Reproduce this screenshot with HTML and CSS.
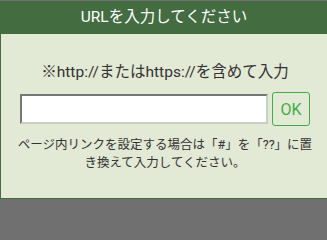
FILE: index.html
```html
<!DOCTYPE html>
<html lang="ja">
<head>
<meta charset="utf-8">
<link rel="stylesheet" href="styles.css">
</head>
<body>
<div class="dialog">
  <div class="header">URLを入力してください</div>
  <div class="content">
    <p class="hint">※http://またはhttps://を含めて入力</p>
    <div class="row">
      <input class="url" type="text">
      <button class="ok" type="button">OK</button>
    </div>
    <p class="note">ページ内リンクを設定する場合は「#」を「??」に置<br>き換えて入力してください。</p>
  </div>
</div>
</body>
</html>
```

FILE: styles.css
```css
html, body {
  margin: 0;
  padding: 0;
}
body {
  width: 327px;
  height: 200px;
  overflow: hidden;
  background: #707070;
  padding-top: 1px;
  box-sizing: border-box;
  font-family: Roboto, "Noto Sans CJK JP", sans-serif;
}
.dialog {
  width: 328px;
  height: 198px;
  box-sizing: border-box;
  border-left: 1px solid #446c41;
  border-right: 1px solid #446c41;
  border-bottom: 1px solid #446c41;
  background: #e2e9d5;
  display: flex;
  flex-direction: column;
}
.header {
  height: 33px;
  background: #446c41;
  color: #ffffff;
  font-size: 15.5px;
  line-height: 33px;
  text-align: center;
}
.content {
  padding: 27px 17px 0 19px;
  display: flex;
  flex-direction: column;
}
.hint {
  margin: 0;
  font-size: 15.5px;
  line-height: 22px;
  color: #333333;
  text-align: center;
}
.row {
  margin-top: 9px;
  display: flex;
  align-items: center;
  gap: 4px;
  height: 34px;
}
.url {
  flex: 1;
  height: 30px;
  box-sizing: border-box;
  margin: 0;
  padding: 0 4px;
  background: #ffffff;
  border-style: solid;
  border-width: 2px;
  border-color: #777777 #cccccc #cccccc #777777;
  outline: none;
}
.ok {
  width: 38px;
  height: 34px;
  margin: 0;
  padding: 0;
  box-sizing: border-box;
  border: 1px solid #3fae47;
  border-radius: 3px;
  background: transparent;
  color: #3fae47;
  font-family: Roboto, "Noto Sans CJK JP", sans-serif;
  font-size: 16px;
}
.note {
  margin: 10px -10px 0;
  font-size: 12.5px;
  line-height: 18px;
  color: #333333;
  text-align: center;
  white-space: nowrap;
}
```
